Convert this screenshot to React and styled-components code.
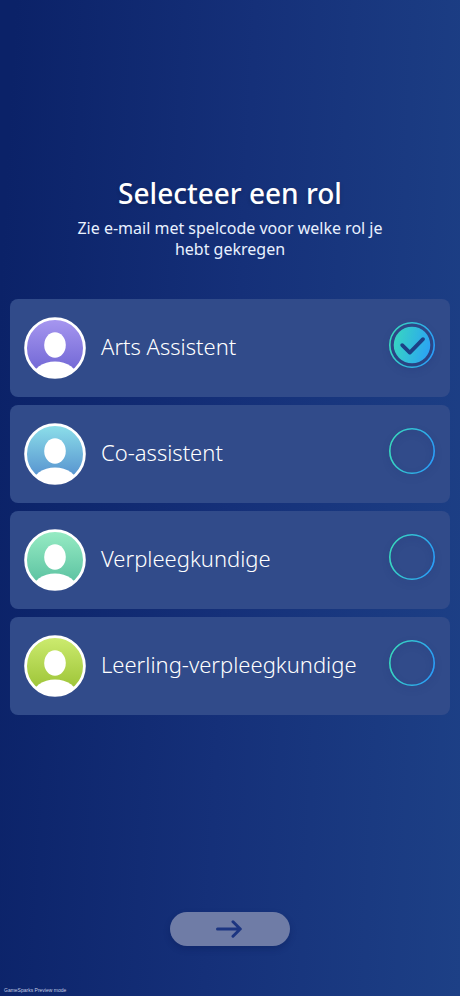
import React, { useState } from "react";
import styled, { createGlobalStyle } from "styled-components";

const roles = [
  { id: "arts", name: "Arts Assistent", from: "#a797f0", to: "#6b62d2" },
  { id: "co", name: "Co-assistent", from: "#8de0ea", to: "#5089cc" },
  { id: "verpleegkundige", name: "Verpleegkundige", from: "#97ecc4", to: "#55bd9d" },
  { id: "leerling", name: "Leerling-verpleegkundige", from: "#cdec70", to: "#97bf30" },
];

const Avatar = ({ id, from, to }) => (
  <AvatarIcon viewBox="0 0 62 62" aria-hidden="true">
    <defs>
      <linearGradient id={`${id}-fill`} x1="0" y1="0" x2="0" y2="1">
        <stop offset="0" stopColor={from} />
        <stop offset="1" stopColor={to} />
      </linearGradient>
      <clipPath id={`${id}-clip`}>
        <circle cx="31" cy="31" r="30" />
      </clipPath>
    </defs>
    <circle cx="31" cy="31" r="29.4" fill={`url(#${id}-fill)`} stroke="#fff" strokeWidth="2.8" />
    <ellipse cx="31" cy="28" rx="10.8" ry="12.8" fill="#fff" />
    <ellipse cx="31" cy="61" rx="22.5" ry="16.5" fill="#fff" clipPath={`url(#${id}-clip)`} />
  </AvatarIcon>
);

const Mark = ({ id, checked }) => (
  <MarkIcon viewBox="0 0 46 46" aria-hidden="true">
    <defs>
      <linearGradient id={`${id}-ring`} gradientUnits="userSpaceOnUse" x1="2" y1="18" x2="44" y2="28">
        <stop offset="0" stopColor="#38d8bf" />
        <stop offset="1" stopColor="#2a9ff8" />
      </linearGradient>
    </defs>
    <circle cx="23" cy="23" r="22.2" fill="none" stroke={`url(#${id}-ring)`} strokeWidth="1.6" />
    {checked && (
      <>
        <circle cx="23" cy="23" r="18.3" fill={`url(#${id}-ring)`} />
        <path
          d="M13.2 23.2 L20.8 30.6 L34 17.2"
          fill="none"
          stroke="#1d4086"
          strokeWidth="3.8"
          strokeLinecap="round"
          strokeLinejoin="round"
        />
      </>
    )}
  </MarkIcon>
);

const App = () => {
  const [selected, setSelected] = useState("arts");

  return (
    <Page>
      <GlobalStyle />
      <Header>
        <Title>Selecteer een rol</Title>
        <Subtitle>Zie e-mail met spelcode voor welke rol je hebt gekregen</Subtitle>
      </Header>
      <RoleList role="radiogroup" aria-label="Selecteer een rol">
        {roles.map((role) => (
          <RoleCard key={role.id} htmlFor={role.id}>
            <Avatar id={role.id} from={role.from} to={role.to} />
            <RoleName>{role.name}</RoleName>
            <RadioWrap>
              <Radio
                type="radio"
                name="role"
                id={role.id}
                value={role.id}
                checked={selected === role.id}
                onChange={() => setSelected(role.id)}
              />
              <Mark id={role.id} checked={selected === role.id} />
            </RadioWrap>
          </RoleCard>
        ))}
      </RoleList>
      <Actions>
        <NextButton type="button" aria-label="Volgende">
          <ArrowIcon viewBox="0 0 26 18" aria-hidden="true">
            <path d="M1.5 9 H24 M17 1.8 L24.3 9 L17 16.2" />
          </ArrowIcon>
        </NextButton>
      </Actions>
      <Footer>GameSparks Preview mode</Footer>
    </Page>
  );
};

const GlobalStyle = createGlobalStyle`
  body {
    margin: 0;
    background: #0c2369;
  }

  * {
    box-sizing: border-box;
  }
`;

const Page = styled.div`
  display: flex;
  flex-direction: column;
  min-height: 100vh;
  padding-top: 173px;
  background: linear-gradient(93deg, #0b2268 3%, #153079 50%, #1d4086 100%);
  color: #fff;
  font-family: "Noto Sans", "Open Sans", sans-serif;
`;

const Header = styled.header`
  padding: 0 70px;
  text-align: center;
`;

const Title = styled.h1`
  margin: 0 0 5px;
  font-size: 28px;
  font-weight: 500;
  line-height: 40px;
  text-shadow: 0 2px 4px rgba(0, 0, 0, 0.2);
`;

const Subtitle = styled.p`
  margin: 0;
  font-size: 16px;
  line-height: 21px;
  color: #e9f1ff;
`;

const RoleList = styled.div`
  display: flex;
  flex-direction: column;
  gap: 8px;
  margin-top: 39px;
  padding: 0 10px;
`;

const RoleCard = styled.label`
  display: flex;
  align-items: center;
  min-height: 98px;
  padding: 0 15px 0 14px;
  border-radius: 8px;
  background: #314b8a;
  cursor: pointer;
`;

const AvatarIcon = styled.svg`
  flex: none;
  width: 62px;
  height: 62px;
`;

const RoleName = styled.span`
  flex: 1;
  margin-left: 15px;
  padding-bottom: 4px;
  font-size: 22px;
  font-weight: 300;
  line-height: 30px;
  color: #fff;
`;

const RadioWrap = styled.span`
  display: grid;
  flex: none;
  margin-bottom: 6px;
`;

const Radio = styled.input`
  grid-area: 1 / 1;
  width: 46px;
  height: 46px;
  margin: 0;
  border-radius: 50%;
  appearance: none;
  cursor: pointer;
`;

const MarkIcon = styled.svg`
  grid-area: 1 / 1;
  width: 46px;
  height: 46px;
  pointer-events: none;
  filter: drop-shadow(0 3px 3px rgba(12, 34, 104, 0.3));
`;

const Actions = styled.div`
  display: flex;
  justify-content: center;
  margin-top: auto;
  padding-top: 40px;
`;

const NextButton = styled.button`
  display: flex;
  align-items: center;
  justify-content: center;
  width: 120px;
  height: 34px;
  padding: 0 2px 0 0;
  border: 0;
  border-radius: 17px;
  background: #6f7ca6;
  box-shadow: 0 3px 6px rgba(8, 24, 80, 0.3);
  cursor: pointer;
`;

const ArrowIcon = styled.svg`
  width: 26px;
  height: 18px;
  fill: none;
  stroke: #1c3581;
  stroke-width: 3;
  stroke-linecap: round;
  stroke-linejoin: round;
`;

const Footer = styled.footer`
  margin-top: 40px;
  padding: 0 4px 2px;
  font-family: "Liberation Sans", Arial, sans-serif;
  font-size: 5px;
  line-height: 8px;
  color: #c3cce4;
`;

export default App;
